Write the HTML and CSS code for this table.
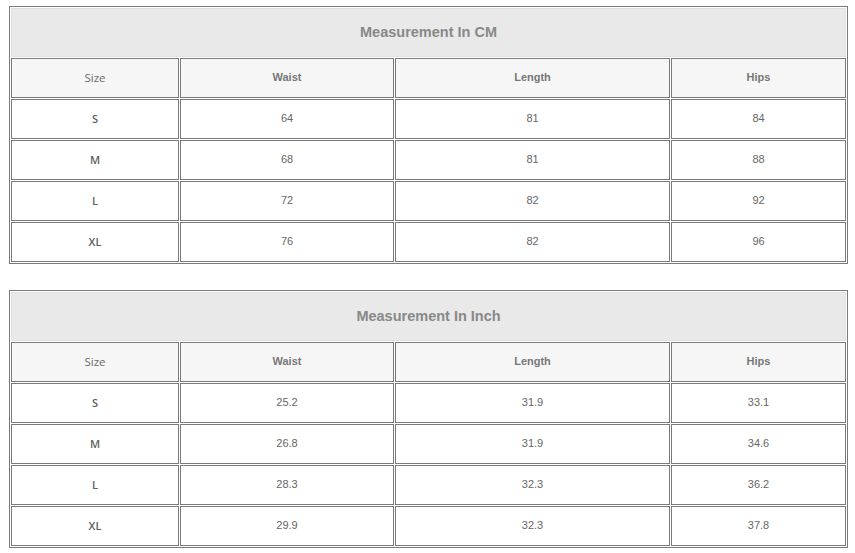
FILE: index.html
```html
<!DOCTYPE html>
<html>
<head>
<meta charset="utf-8">
<link rel="stylesheet" href="styles.css">
</head>
<body>
<div class="page">
  <table class="chart">
    <colgroup><col class="c1"><col class="c2"><col class="c3"><col class="c4"></colgroup>
    <tr><th class="title" colspan="4">Measurement In CM</th></tr>
    <tr class="head">
      <td class="lbl">Size</td><td>Waist</td><td>Length</td><td>Hips</td>
    </tr>
    <tr><td class="size">S</td><td>64</td><td>81</td><td>84</td></tr>
    <tr><td class="size">M</td><td>68</td><td>81</td><td>88</td></tr>
    <tr><td class="size">L</td><td>72</td><td>82</td><td>92</td></tr>
    <tr><td class="size">XL</td><td>76</td><td>82</td><td>96</td></tr>
  </table>
  <table class="chart">
    <colgroup><col class="c1"><col class="c2"><col class="c3"><col class="c4"></colgroup>
    <tr><th class="title" colspan="4">Measurement In Inch</th></tr>
    <tr class="head">
      <td class="lbl">Size</td><td>Waist</td><td>Length</td><td>Hips</td>
    </tr>
    <tr><td class="size">S</td><td>25.2</td><td>31.9</td><td>33.1</td></tr>
    <tr><td class="size">M</td><td>26.8</td><td>31.9</td><td>34.6</td></tr>
    <tr><td class="size">L</td><td>28.3</td><td>32.3</td><td>36.2</td></tr>
    <tr><td class="size">XL</td><td>29.9</td><td>32.3</td><td>37.8</td></tr>
  </table>
</div>
</body>
</html>
```
FILE: styles.css
```css
html, body {
  margin: 0;
  padding: 0;
  background: #ffffff;
}
.page {
  padding: 6px 0 0 9px;
  display: flex;
  flex-direction: column;
  gap: 26px;
}
.chart {
  width: 839px;
  border-collapse: separate;
  border-spacing: 1px;
  border: 1px solid #7a7a7a;
  table-layout: fixed;
  font-family: "Liberation Sans", Arial, sans-serif;
}
.chart .c1 { width: 168px; }
.chart .c2 { width: 214px; }
.chart .c3 { width: 275px; }
.chart .c4 { width: 175px; }
.chart td, .chart th {
  padding: 0 0 2px 0;
  text-align: center;
  vertical-align: middle;
}
.chart td {
  height: 36px;
  border: 1px solid #7a7a7a;
  font-size: 11px;
  color: #666666;
  background: #ffffff;
}
.chart .title {
  height: 45px;
  border: 1px solid #e0e0e0;
  background: #e9e9e9;
  color: #888888;
  font-size: 14.5px;
  font-weight: bold;
}
.chart .head td {
  background: #f6f6f6;
  font-weight: bold;
  color: #777777;
}
.chart .head td.lbl {
  font-family: "Open Sans", sans-serif;
  font-weight: normal;
  font-size: 11.5px;
  color: #6a6a6a;
}
.chart td.size {
  font-family: "Open Sans", sans-serif;
  font-weight: 600;
  font-size: 11px;
  color: #606060;
}
```
